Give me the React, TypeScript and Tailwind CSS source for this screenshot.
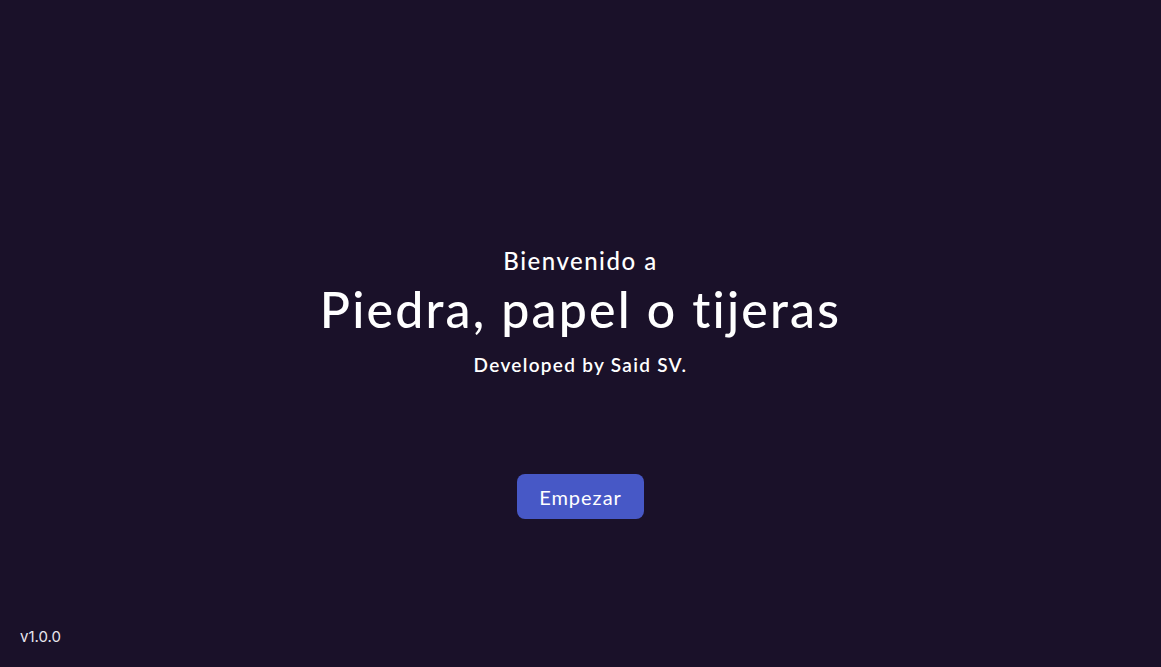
import React from 'react'

const App: React.FC = () => {
  return (
    <div className="h-screen w-full bg-[#1a1129] text-white flex flex-col font-['Lato','Noto_Sans',sans-serif]">
      <main className="flex-1 flex flex-col items-center pt-[245px]">
        <p className="text-[24px] leading-[32px] font-medium tracking-[1.5px]">Bienvenido a</p>
        <h1 className="mt-[8px] text-[50px] leading-[48px] font-medium tracking-[2.2px]">Piedra, papel o tijeras</h1>
        <p className="mt-[18px] text-[19px] leading-[28px] font-semibold tracking-[1.3px]">Developed by Said SV.</p>
        <button className="mt-[95px] w-[127px] h-[45px] rounded-[8px] bg-[#4758c6] text-[20px] tracking-[1px] text-white">
          Empezar
        </button>
      </main>
      <footer className="px-[20px] pb-[20px] text-[15px] leading-[20px] font-['Inter',sans-serif] text-[#e8e6ee]">
        v1.0.0
      </footer>
    </div>
  )
}

export default App
